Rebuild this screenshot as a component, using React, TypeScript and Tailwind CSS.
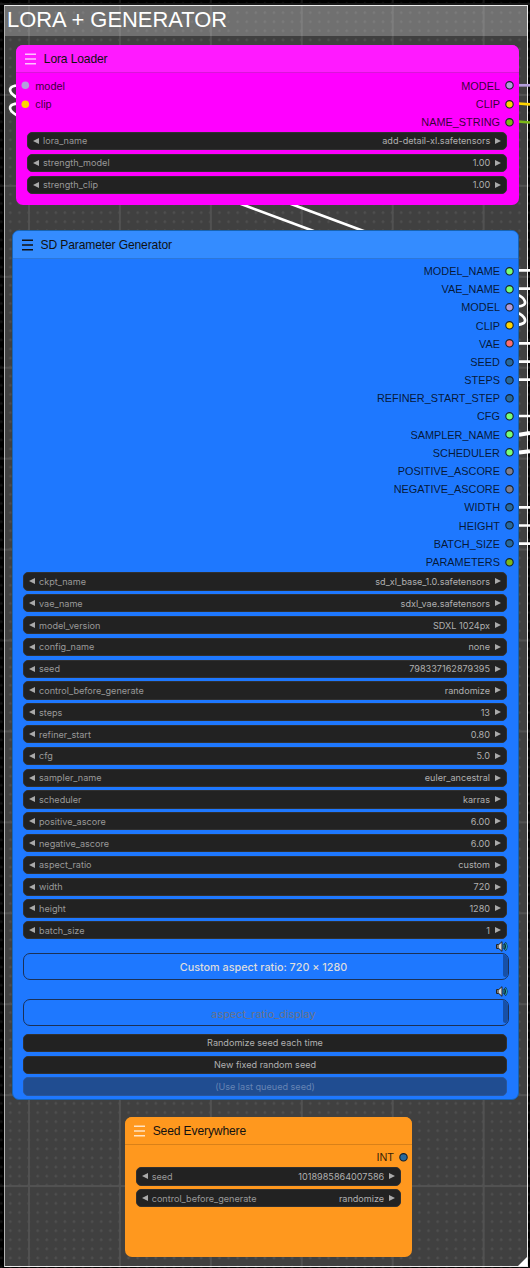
import React from "react";

type Slot = { name: string; color: string };
type Row = [label: string, value: string];

const GREEN = "#77ff77";
const INT = "#29699c";
const GREY = "#7f7f8f";
const OLIVE = "#7cb817";

const loraOutputs: Slot[] = [
  { name: "MODEL", color: "#b39ddb" },
  { name: "CLIP", color: "#ffd500" },
  { name: "NAME_STRING", color: OLIVE },
];

const sdOutputs: Slot[] = [
  { name: "MODEL_NAME", color: GREEN },
  { name: "VAE_NAME", color: GREEN },
  { name: "MODEL", color: "#b39ddb" },
  { name: "CLIP", color: "#ffd500" },
  { name: "VAE", color: "#ff6e6e" },
  { name: "SEED", color: INT },
  { name: "STEPS", color: INT },
  { name: "REFINER_START_STEP", color: INT },
  { name: "CFG", color: GREEN },
  { name: "SAMPLER_NAME", color: GREEN },
  { name: "SCHEDULER", color: GREEN },
  { name: "POSITIVE_ASCORE", color: GREY },
  { name: "NEGATIVE_ASCORE", color: GREY },
  { name: "WIDTH", color: INT },
  { name: "HEIGHT", color: INT },
  { name: "BATCH_SIZE", color: INT },
  { name: "PARAMETERS", color: OLIVE },
];

const loraRows: Row[] = [
  ["lora_name", "add-detail-xl.safetensors"],
  ["strength_model", "1.00"],
  ["strength_clip", "1.00"],
];

const sdRows: Row[] = [
  ["ckpt_name", "sd_xl_base_1.0.safetensors"],
  ["vae_name", "sdxl_vae.safetensors"],
  ["model_version", "SDXL 1024px"],
  ["config_name", "none"],
  ["seed", "798337162879395"],
  ["control_before_generate", "randomize"],
  ["steps", "13"],
  ["refiner_start", "0.80"],
  ["cfg", "5.0"],
  ["sampler_name", "euler_ancestral"],
  ["scheduler", "karras"],
  ["positive_ascore", "6.00"],
  ["negative_ascore", "6.00"],
  ["aspect_ratio", "custom"],
  ["width", "720"],
  ["height", "1280"],
  ["batch_size", "1"],
];

const seedRows: Row[] = [
  ["seed", "1018985864007586"],
  ["control_before_generate", "randomize"],
];

function Grid() {
  return (
    <svg className="absolute inset-0" width="530" height="1268">
      <defs>
        <pattern id="dots" x="24.05" y="-0.95" width="9.09" height="9.09" patternUnits="userSpaceOnUse">
          <path d="M3 4.55h3M4.5 3v3" stroke="#191919" strokeWidth="1" />
        </pattern>
        <pattern id="lines" x="28" y="3" width="90.93" height="90.93" patternUnits="userSpaceOnUse">
          <path d="M0 1h90.93M1 0v90.93" stroke="#191919" strokeWidth="1.8" />
        </pattern>
      </defs>
      <rect width="530" height="1268" fill="#000" />
      <rect width="530" height="1268" fill="url(#dots)" />
      <rect width="530" height="1268" fill="url(#lines)" />
    </svg>
  );
}

function Links() {
  return (
    <svg className="absolute inset-0" width="530" height="1268" fill="none" stroke="#fff" strokeWidth="2.7">
      <path d="M18 85.5C10 85.5 5 91 18 98M18 103.700C10 103.700 5 109 18 116" />
      <path d="M237 202.500L319 233M287 202.500L369 233" strokeWidth="2.7" />
      <path d="M518 85.300H530" stroke="#b39ddb" />
      <path d="M518 103.500L530 104.300" stroke="#ffd500" />
      <path d="M518 121.500L530 122.500" stroke="#7cb817" />
      <path d="M519 270.400H530M519 288.700H530M519 343.400H530M519 361.600H530M519 379.600H530M519 416H530M519 507.400H530M519 525.500H530M519 543.600H530" />
      <path d="M519 434.700L530 433M519 452.600L530 451.200" strokeWidth="4" />
      <path d="M517 294.500C524 297 531 306 517 306.500M517 312.700C524 315 531 324 517 324.700" />
    </svg>
  );
}

function Title({ text, className, dark }: { text: string; className: string; dark?: boolean }) {
  return (
    <div className={`flex h-[27.3px] shrink-0 items-center gap-[7.5px] border-b-[1.5px] border-black/15 pt-[1.5px] pl-[9px] text-[12.1px] tracking-[-0.14px] text-[#111] ${className}`}>
      <svg width="11" height="12" viewBox="0 0 11 12" fill="none" stroke={dark ? "#111" : "#ffffffbb"} strokeWidth="1.4">
        <path d="M0 1.300H11M0 6H11M0 10.700H11" />
      </svg>
      <span className="whitespace-nowrap">{text}</span>
    </div>
  );
}

function Outputs({ slots, className }: { slots: Slot[]; className: string }) {
  return (
    <div className={`flex flex-col items-end ${className}`}>
      {slots.map((s) => (
        <div key={s.name} className="flex h-[18.18px] items-center gap-[5px] text-[10.9px] text-[#000000cc]">
          <span>{s.name}</span>
          <svg width="9" height="9" viewBox="0 0 9 9">
            <circle cx="4.500" cy="4.300" r="3.700" fill={s.color} stroke="#14202c" strokeWidth="1.100" />
          </svg>
        </div>
      ))}
    </div>
  );
}

function Widgets({ rows }: { rows: Row[] }) {
  return (
    <div className="flex flex-col gap-[3.64px]">
      {rows.map(([label, value]) => (
        <div
          key={label}
          className="flex h-[18.18px] items-center rounded-[5px] border border-[#303030] bg-[#222] px-[5px] font-['Inter',sans-serif] text-[9.1px] text-[#999]"
        >
          <svg width="6" height="6" viewBox="0 0 6 6" fill="#aaa">
            <path d="M6 0V6L0 3Z" />
          </svg>
          <span className="ml-[4px] flex-1 pt-[0.6px]">{label}</span>
          <span className="mr-[5px] pt-[0.6px] text-[#b0b0b0]">{value}</span>
          <svg width="6" height="6" viewBox="0 0 6 6" fill="#aaa">
            <path d="M0 0V6L6 3Z" />
          </svg>
        </div>
      ))}
    </div>
  );
}

function Speaker() {
  return (
    <svg className="mr-[7px] self-end" width="12" height="11" viewBox="0 0 12 11">
      <path d="M0.500 3.500H2.800L6 0.700V10.300L2.800 7.500H0.500Z" fill="#d8d8d8" stroke="#222" strokeWidth="1" />
      <path d="M1 4H3V7H1Z" fill="#777" />
      <path d="M7.600 3.200C8.500 4.500 8.500 6.500 7.600 7.800M9 1.700C11 3.800 11 7.200 9 9.300" fill="none" stroke="#123" strokeWidth="2.200" />
      <path d="M7.700 3.500C8.300 4.700 8.300 6.300 7.700 7.500M9.300 2.200C11 4 11 7 9.300 8.800" fill="none" stroke="#26a0a8" strokeWidth="1.100" />
    </svg>
  );
}

function Display({ text, className }: { text: string; className: string }) {
  return (
    <div className="flex h-[27.500px] w-[486px] overflow-hidden rounded-[7px] border border-[#1b3158] font-['Inter',sans-serif]">
      <span className={`flex flex-1 items-center justify-center ${className}`}>{text}</span>
      <span className="mb-[2px] w-[5px] rounded-b-[3px] bg-[#1750a8]" />
    </div>
  );
}

function Button({ text, className }: { text: string; className: string }) {
  return (
    <div className={`flex h-[18.18px] items-center justify-center rounded-[5px] border pt-[0.8px] font-['Inter',sans-serif] text-[9.1px] ${className}`}>
      {text}
    </div>
  );
}

export default function App() {
  return (
    <main className="relative h-[1268px] w-[530px] overflow-hidden bg-black font-['Liberation_Sans',Arial,sans-serif]">
      <Grid />
      <section className="absolute top-[5px] left-[4px] h-[1262px] w-[524px] border border-white/90 border-l-white/60 bg-white/25">
        <h1 className="h-[30px] bg-white/25 pl-[2px] text-[21.900px] leading-[28px] whitespace-nowrap text-white">LORA + GENERATOR</h1>
        <svg className="absolute right-0 bottom-0" width="9" height="9" fill="#fff">
          <path d="M9 0V9H0Z" />
        </svg>
      </section>
      <Links />

      <article className="absolute top-[45.300px] left-[16.300px] flex h-[160px] w-[502.400px] flex-col overflow-hidden rounded-[7px] bg-[#ff00ff]">
        <Title text="Lora Loader" className="bg-[#ff1aff]" />
        <div className="flex justify-between pt-[4.300px] pb-[0.500px]">
          <div className="flex flex-col pl-[5px]">
            {[
              { name: "model", color: "#b39ddb" },
              { name: "clip", color: "#ffd500" },
            ].map((s) => (
              <div key={s.name} className="flex h-[18.180px] items-center gap-[5px] text-[10.900px] text-[#000000cc]">
                <svg width="9" height="9">
                  <circle cx="4.300" cy="4.300" r="3.800" fill={s.color} />
                </svg>
                <span>{s.name}</span>
              </div>
            ))}
          </div>
          <Outputs slots={loraOutputs} className="pr-[4.700px]" />
        </div>
        <div className="pr-[11.500px] pl-[10.700px]">
          <Widgets rows={loraRows} />
        </div>
      </article>

      <article className="absolute top-[230.300px] left-[12px] flex h-[869.500px] w-[506.500px] flex-col overflow-hidden rounded-[7px] border border-[#1764b4] bg-[#1e78ff]">
        <Title text="SD Parameter Generator" className="bg-[#348cff] pl-[8.500px]" dark />
        <Outputs slots={sdOutputs} className="pt-[3.600px] pr-[3.500px] pb-[1.300px]" />
        <div className="flex flex-col pr-[10.500px] pl-[10px]">
          <Widgets rows={sdRows} />
          <div className="-mr-[10.500px] flex flex-col pt-[1.500px] pb-[7.500px]">
            <div className="flex h-[12px] flex-col pr-[3px]"><Speaker /></div>
            <Display text="Custom aspect ratio: 720 × 1280" className="pt-[4px] text-[10.800px] font-medium text-[#ddd]" />
            <div className="mt-[5.500px] flex h-[13px] flex-col pr-[3px]"><Speaker /></div>
            <Display text="aspect_ratio_display" className="pt-[2.500px] text-[10.900px] text-[#6c7383]" />
          </div>
          <div className="flex flex-col gap-[3.640px]">
            <Button text="Randomize seed each time" className="border-[#303030] bg-[#222] text-[#b0b0b0]" />
            <Button text="New fixed random seed" className="border-[#303030] bg-[#222] text-[#b0b0b0]" />
            <Button text="(Use last queued seed)" className="border-[#28569c] bg-[#204d91] text-[#6684b3]" />
          </div>
        </div>
      </article>

      <article className="absolute top-[1117.300px] left-[125.200px] flex h-[139.500px] w-[287.300px] flex-col overflow-hidden rounded-[7px] bg-[#ff981e]">
        <Title text="Seed Everywhere" className="bg-[#ff981e]" />
        <Outputs slots={[{ name: "INT", color: INT }]} className="pt-[3.600px] pr-[4.500px] pb-[1px]" />
        <div className="pr-[11.300px] pl-[10.500px]">
          <Widgets rows={seedRows} />
        </div>
      </article>
    </main>
  );
}
